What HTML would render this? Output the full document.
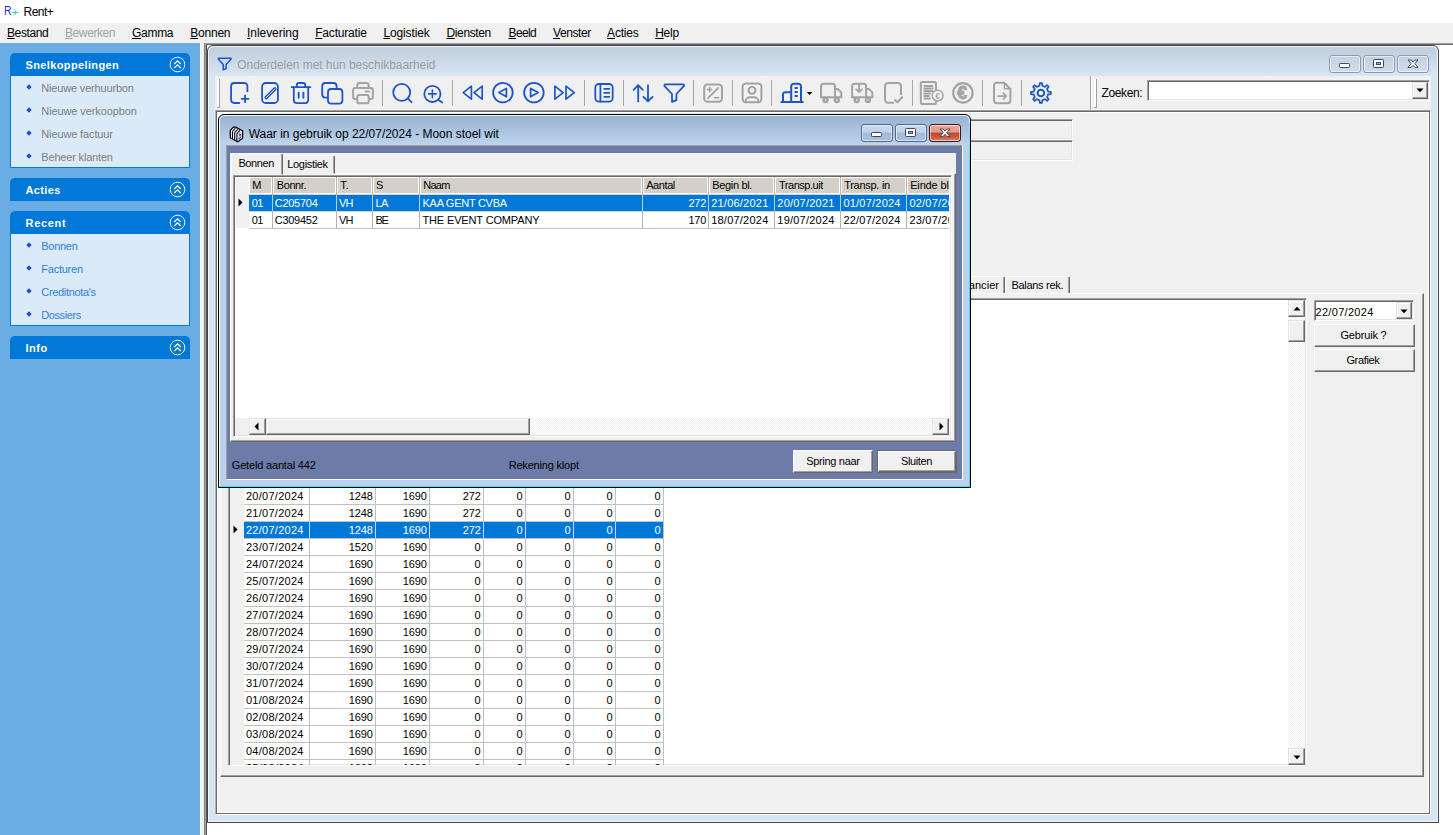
<!DOCTYPE html>
<html lang="nl"><head><meta charset="utf-8"><title>Rent+</title>
<style>
html,body{margin:0;padding:0;background:#fff;}
body{width:1453px;height:835px;overflow:hidden;font-family:"Liberation Sans",sans-serif;}
#root{position:relative;width:1453px;height:835px;overflow:hidden;background:#fff;}
#root div,#root span.t,#root svg{position:absolute;box-sizing:border-box;}
span.t{white-space:pre;display:block;}
u{text-decoration:underline;text-underline-offset:1px;}
.sunk{border:1px solid;border-color:#a0a0a0 #fff #fff #a0a0a0;box-shadow:inset 1px 1px 0 #696969,inset -1px -1px 0 #e3e3e3;}
.btn{background:#f0f0f0;border:1px solid;border-color:#fff #696969 #696969 #fff;box-shadow:inset -1px -1px 0 #a0a0a0,inset 1px 1px 0 #f0f0f0;}
.sbtn{background:#f0f0f0;border:1px solid;border-color:#e3e3e3 #696969 #696969 #e3e3e3;box-shadow:inset -1px -1px 0 #a0a0a0,inset 1px 1px 0 #fff;}
.hc{background:#d4d0c8;}
.track{background-color:#f8f8f8;background-image:conic-gradient(#fff 25%,#f0f0f0 0 50%,#fff 0 75%,#f0f0f0 0);background-size:2px 2px;}

</style></head>
<body>
<div id="root">
<div style="left:0px;top:23px;width:1453px;height:20px;background:#f0f0f0;"></div>
<span id="t0" class="t" style="top:3px;font-size:13px;line-height:15px;height:15px;color:#2a2ae0;left:3.6px;transform:scaleX(.8);transform-origin:0 0;">R</span>
<span id="t1" class="t" style="top:6px;font-size:11px;line-height:13px;height:13px;color:#1fcdb4;letter-spacing:-0.838px;left:11.7px;">+</span>
<span id="t2" class="t" style="top:5px;font-size:12px;line-height:14px;height:14px;color:#000;letter-spacing:-0.524px;left:23.5px;">Rent+</span>
<span id="t3" class="t" style="top:26px;font-size:12px;line-height:14px;height:14px;color:#000;letter-spacing:-0.407px;left:7px;"><u>B</u>estand</span>
<span id="t4" class="t" style="top:26px;font-size:12px;line-height:14px;height:14px;color:#a3a3a3;letter-spacing:-0.410px;left:65px;"><u>B</u>ewerken</span>
<span id="t5" class="t" style="top:26px;font-size:12px;line-height:14px;height:14px;color:#000;letter-spacing:-0.286px;left:132px;"><u>G</u>amma</span>
<span id="t6" class="t" style="top:26px;font-size:12px;line-height:14px;height:14px;color:#000;letter-spacing:-0.235px;left:190.3px;"><u>B</u>onnen</span>
<span id="t7" class="t" style="top:26px;font-size:12px;line-height:14px;height:14px;color:#000;letter-spacing:-0.047px;left:247px;"><u>I</u>nlevering</span>
<span id="t8" class="t" style="top:26px;font-size:12px;line-height:14px;height:14px;color:#000;letter-spacing:-0.187px;left:315.2px;"><u>F</u>acturatie</span>
<span id="t9" class="t" style="top:26px;font-size:12px;line-height:14px;height:14px;color:#000;letter-spacing:-0.126px;left:383.4px;"><u>L</u>ogistiek</span>
<span id="t10" class="t" style="top:26px;font-size:12px;line-height:14px;height:14px;color:#000;letter-spacing:-0.370px;left:446.5px;"><u>D</u>iensten</span>
<span id="t11" class="t" style="top:26px;font-size:12px;line-height:14px;height:14px;color:#000;letter-spacing:-0.601px;left:508.5px;"><u>B</u>eeld</span>
<span id="t12" class="t" style="top:26px;font-size:12px;line-height:14px;height:14px;color:#000;letter-spacing:-0.431px;left:553.1px;"><u>V</u>enster</span>
<span id="t13" class="t" style="top:26px;font-size:12px;line-height:14px;height:14px;color:#000;letter-spacing:-0.219px;left:607.1px;"><u>A</u>cties</span>
<span id="t14" class="t" style="top:26px;font-size:12px;line-height:14px;height:14px;color:#000;letter-spacing:-0.254px;left:655.2px;"><u>H</u>elp</span>
<div style="left:0px;top:43px;width:200px;height:792px;background:#6aade4;"></div>
<div style="left:200px;top:43px;width:4px;height:792px;background:#f0f0f0;border-left:1px solid #fff;"></div>
<div style="left:10px;top:53px;width:180px;height:23px;background:#0078d7;border-radius:5px 5px 0 0;"></div>
<span id="t15" class="t" style="top:59px;font-size:11px;line-height:13px;height:13px;color:#fff;font-weight:bold;letter-spacing:0.371px;left:25.5px;">Snelkoppelingen</span>
<svg style="left:169px;top:56px" width="17" height="17" viewBox="0 0 17 17"><circle cx="8.5" cy="8.5" r="7.3" fill="none" stroke="#fff" stroke-width="1"/><path d="M5.2 8 L8.5 4.8 L11.8 8 M5.2 12 L8.5 8.8 L11.8 12" fill="none" stroke="#fff" stroke-width="1.2"/></svg>
<div style="left:10px;top:76px;width:180px;height:92px;background:#dbeaf9;border:1px solid #0078d7;border-top:none;"></div>
<svg style="left:25.5px;top:84.1px" width="6" height="6" viewBox="0 0 6 6"><path d="M3 0.3 L5.7 3 L3 5.7 L0.3 3Z" fill="#1f4fd0"/></svg>
<span id="t16" class="t" style="top:82px;font-size:11px;line-height:13px;height:13px;color:#7d7d7d;letter-spacing:-0.175px;left:41.3px;">Nieuwe verhuurbon</span>
<svg style="left:25.5px;top:107.1px" width="6" height="6" viewBox="0 0 6 6"><path d="M3 0.3 L5.7 3 L3 5.7 L0.3 3Z" fill="#1f4fd0"/></svg>
<span id="t17" class="t" style="top:105px;font-size:11px;line-height:13px;height:13px;color:#7d7d7d;letter-spacing:-0.099px;left:41.3px;">Nieuwe verkoopbon</span>
<svg style="left:25.5px;top:130.1px" width="6" height="6" viewBox="0 0 6 6"><path d="M3 0.3 L5.7 3 L3 5.7 L0.3 3Z" fill="#1f4fd0"/></svg>
<span id="t18" class="t" style="top:128px;font-size:11px;line-height:13px;height:13px;color:#7d7d7d;letter-spacing:-0.131px;left:41.3px;">Nieuwe factuur</span>
<svg style="left:25.5px;top:153.1px" width="6" height="6" viewBox="0 0 6 6"><path d="M3 0.3 L5.7 3 L3 5.7 L0.3 3Z" fill="#1f4fd0"/></svg>
<span id="t19" class="t" style="top:151px;font-size:11px;line-height:13px;height:13px;color:#7d7d7d;letter-spacing:-0.178px;left:41.3px;">Beheer klanten</span>
<div style="left:10px;top:178px;width:180px;height:23px;background:#0078d7;border-radius:5px 5px 0 0;"></div>
<span id="t20" class="t" style="top:184px;font-size:11px;line-height:13px;height:13px;color:#fff;font-weight:bold;letter-spacing:0.358px;left:25.5px;">Acties</span>
<svg style="left:169px;top:181px" width="17" height="17" viewBox="0 0 17 17"><circle cx="8.5" cy="8.5" r="7.3" fill="none" stroke="#fff" stroke-width="1"/><path d="M5.2 8 L8.5 4.8 L11.8 8 M5.2 12 L8.5 8.8 L11.8 12" fill="none" stroke="#fff" stroke-width="1.2"/></svg>
<div style="left:10px;top:211px;width:180px;height:23px;background:#0078d7;border-radius:5px 5px 0 0;"></div>
<span id="t21" class="t" style="top:217px;font-size:11px;line-height:13px;height:13px;color:#fff;font-weight:bold;letter-spacing:0.693px;left:25.5px;">Recent</span>
<svg style="left:169px;top:214px" width="17" height="17" viewBox="0 0 17 17"><circle cx="8.5" cy="8.5" r="7.3" fill="none" stroke="#fff" stroke-width="1"/><path d="M5.2 8 L8.5 4.8 L11.8 8 M5.2 12 L8.5 8.8 L11.8 12" fill="none" stroke="#fff" stroke-width="1.2"/></svg>
<div style="left:10px;top:234px;width:180px;height:92px;background:#dbeaf9;border:1px solid #0078d7;border-top:none;"></div>
<svg style="left:25.5px;top:242.1px" width="6" height="6" viewBox="0 0 6 6"><path d="M3 0.3 L5.7 3 L3 5.7 L0.3 3Z" fill="#1f4fd0"/></svg>
<span id="t22" class="t" style="top:240px;font-size:11px;line-height:13px;height:13px;color:#2f7fd6;letter-spacing:-0.280px;left:41.3px;">Bonnen</span>
<svg style="left:25.5px;top:265.1px" width="6" height="6" viewBox="0 0 6 6"><path d="M3 0.3 L5.7 3 L3 5.7 L0.3 3Z" fill="#1f4fd0"/></svg>
<span id="t23" class="t" style="top:263px;font-size:11px;line-height:13px;height:13px;color:#2f7fd6;letter-spacing:-0.243px;left:41.3px;">Facturen</span>
<svg style="left:25.5px;top:288.1px" width="6" height="6" viewBox="0 0 6 6"><path d="M3 0.3 L5.7 3 L3 5.7 L0.3 3Z" fill="#1f4fd0"/></svg>
<span id="t24" class="t" style="top:286px;font-size:11px;line-height:13px;height:13px;color:#2f7fd6;letter-spacing:-0.327px;left:41.3px;">Creditnota's</span>
<svg style="left:25.5px;top:311.1px" width="6" height="6" viewBox="0 0 6 6"><path d="M3 0.3 L5.7 3 L3 5.7 L0.3 3Z" fill="#1f4fd0"/></svg>
<span id="t25" class="t" style="top:309px;font-size:11px;line-height:13px;height:13px;color:#2f7fd6;letter-spacing:-0.413px;left:41.3px;">Dossiers</span>
<div style="left:10px;top:336px;width:180px;height:23px;background:#0078d7;border-radius:5px 5px 0 0;"></div>
<span id="t26" class="t" style="top:342px;font-size:11px;line-height:13px;height:13px;color:#fff;font-weight:bold;letter-spacing:0.522px;left:25.5px;">Info</span>
<svg style="left:169px;top:339px" width="17" height="17" viewBox="0 0 17 17"><circle cx="8.5" cy="8.5" r="7.3" fill="none" stroke="#fff" stroke-width="1"/><path d="M5.2 8 L8.5 4.8 L11.8 8 M5.2 12 L8.5 8.8 L11.8 12" fill="none" stroke="#fff" stroke-width="1.2"/></svg>
<div style="left:204px;top:43px;width:1249px;height:1px;background:#a0a0a0;"></div>
<div style="left:204px;top:44px;width:1249px;height:1px;background:#696969;"></div>
<div style="left:204px;top:43px;width:1px;height:792px;background:#808080;"></div>
<div style="left:205px;top:44px;width:1px;height:791px;background:#a0a0a0;"></div>
<div style="left:206px;top:44px;width:1px;height:791px;background:#555;"></div>
<div style="left:207px;top:45px;width:1232px;height:778px;background:#d7e4f2;border:1px solid #454545;border-radius:6px 6px 0 0;box-shadow:inset 0 0 0 1px #f0f5fb;"></div>
<div style="left:209px;top:47px;width:1228px;height:29px;background:linear-gradient(#bfcddc,#d9e5f2);border-radius:5px 5px 0 0;"></div>
<svg style="left:216px;top:55px" width="18" height="17" viewBox="216 55 18 17"><g transform="translate(218.2 58.2) scale(0.655) translate(-664.3 -84.4)"><path d="M665.4 84.4 H683 a1 1 0 0 1 0.8 1.7 L676.4 94 V100.2 L672 101.9 V94 L664.6 86.1 a1 1 0 0 1 0.8 -1.7 Z" fill="none" stroke="#1d56c4" stroke-width="2.4" stroke-linejoin="round"/></g></svg>
<span id="t27" class="t" style="top:58px;font-size:12px;line-height:14px;height:14px;color:#9e9ca2;letter-spacing:-0.058px;left:237.3px;">Onderdelen met hun beschikbaarheid</span>
<div style="left:1329px;top:55px;width:32px;height:18px;background:linear-gradient(#c3d1e1,#cfdcea);border:1px solid #8d9ab5;border-radius:3px;box-shadow:inset 0 0 0 1px rgba(255,255,255,.55);"></div>
<svg style="left:1338px;top:62px" width="13" height="7" viewBox="0 0 13 7"><rect x="1.5" y="1.5" width="10" height="4" rx="0.8" fill="#fbfbfb" stroke="#41485c" stroke-width="1"/></svg>
<div style="left:1363px;top:55px;width:32px;height:18px;background:linear-gradient(#c3d1e1,#cfdcea);border:1px solid #8d9ab5;border-radius:3px;box-shadow:inset 0 0 0 1px rgba(255,255,255,.55);"></div>
<svg style="left:1372px;top:58px" width="13" height="11" viewBox="0 0 13 11"><rect x="1.5" y="1.5" width="10" height="8" rx="0.8" fill="#fbfbfb" stroke="#41485c" stroke-width="1"/><rect x="4.5" y="4.5" width="4" height="2" fill="#9fb6d2" stroke="#41485c" stroke-width="1"/></svg>
<div style="left:1397px;top:55px;width:32px;height:18px;background:linear-gradient(#c3d1e1,#cfdcea);border:1px solid #8d9ab5;border-radius:3px;box-shadow:inset 0 0 0 1px rgba(255,255,255,.55);"></div>
<svg style="left:1406px;top:58px" width="14" height="11" viewBox="0 0 14 11"><path d="M2 2 H5.2 L7 4 L8.8 2 H12 L8.8 5.6 L12 9.4 H8.8 L7 7.3 L5.2 9.4 H2 L5.2 5.6 Z" fill="#fbfbfb" stroke="#41485c" stroke-width="1" stroke-linejoin="round"/></svg>
<div style="left:215px;top:76px;width:1216px;height:34px;background:#f0f0f0;"></div>
<div style="left:217px;top:79px;width:2px;height:28px;background:#fff;"></div>
<div style="left:219px;top:79px;width:1px;height:29px;background:#a0a0a0;"></div>
<div style="left:217px;top:107px;width:2px;height:1px;background:#a0a0a0;"></div>
<div style="left:382px;top:80px;width:1px;height:26px;background:#a7a7a7;"></div>
<div style="left:452px;top:80px;width:1px;height:26px;background:#a7a7a7;"></div>
<div style="left:584px;top:80px;width:1px;height:26px;background:#a7a7a7;"></div>
<div style="left:623px;top:80px;width:1px;height:26px;background:#a7a7a7;"></div>
<div style="left:693px;top:80px;width:1px;height:26px;background:#a7a7a7;"></div>
<div style="left:732px;top:80px;width:1px;height:26px;background:#a7a7a7;"></div>
<div style="left:771px;top:80px;width:1px;height:26px;background:#a7a7a7;"></div>
<div style="left:912px;top:80px;width:1px;height:26px;background:#a7a7a7;"></div>
<div style="left:982px;top:80px;width:1px;height:26px;background:#a7a7a7;"></div>
<div style="left:1021px;top:80px;width:1px;height:26px;background:#a7a7a7;"></div>
<div style="left:1090px;top:76px;width:1px;height:34px;background:#a0a0a0;"></div>
<div style="left:1091px;top:76px;width:1px;height:34px;background:#fff;"></div>
<div style="left:1094px;top:79px;width:2px;height:28px;background:#fff;"></div>
<div style="left:1096px;top:79px;width:1px;height:29px;background:#a0a0a0;"></div>
<div style="left:1094px;top:107px;width:2px;height:1px;background:#a0a0a0;"></div>
<span id="t28" class="t" style="top:86px;font-size:12px;line-height:14px;height:14px;color:#000;letter-spacing:-0.394px;left:1101.6px;">Zoeken:</span>
<div class="sunk" style="left:1147px;top:80px;width:283px;height:21px;background:#fff;"></div>
<div class="sbtn" style="left:1412px;top:82px;width:16px;height:17px;"></div>
<svg style="left:1416px;top:88px" width="8" height="5" viewBox="0 0 8 5"><path d="M0.5 0.5H7.5L4 4.3Z" fill="#000"/></svg>
<svg style="left:215px;top:76px" width="1216" height="34" viewBox="215 76 1216 34"><path d="M247.4 91.3 V86.2 a3.2 3.2 0 0 0 -3.2 -3.2 H234.3 a3.2 3.2 0 0 0 -3.2 3.2 V99.8 a3.2 3.2 0 0 0 3.2 3.2 H239.3" fill="none" stroke="#1d56c4" stroke-width="1.8" stroke-linecap="round" stroke-linejoin="round" /><path d="M241.7 98.8 H248.5 M245.1 95.4 V102.2" fill="none" stroke="#1d56c4" stroke-width="1.8" stroke-linecap="round" stroke-linejoin="round" /><rect x="262.1" y="83" width="15.8" height="20" rx="3.6" fill="none" stroke="#1d56c4" stroke-width="1.8"/><path d="M266.2 97.6 L274.8 89" fill="none" stroke="#1d56c4" stroke-width="3.6" stroke-linecap="round" stroke-linejoin="round" /><path d="M266.2 97.6 L274.8 89" fill="none" stroke="#f0f0f0" stroke-width="1.0" stroke-linecap="round" stroke-linejoin="round" /><path d="M291.6 87.1 H310.4" fill="none" stroke="#1d56c4" stroke-width="1.8" stroke-linecap="round" stroke-linejoin="round" /><path d="M296.8 86.8 V85.2 a2.2 2.2 0 0 1 2.2 -2.2 h4 a2.2 2.2 0 0 1 2.2 2.2 V86.8" fill="none" stroke="#1d56c4" stroke-width="1.8" stroke-linecap="round" stroke-linejoin="round" /><path d="M293.8 87.3 V100 a3.2 3.2 0 0 0 3.2 3.2 h8 a3.2 3.2 0 0 0 3.2 -3.2 V87.3" fill="none" stroke="#1d56c4" stroke-width="1.8" stroke-linecap="round" stroke-linejoin="round" /><path d="M298.7 92.6 V97.8 M303.4 92.6 V97.8" fill="none" stroke="#1d56c4" stroke-width="1.9" stroke-linecap="round" stroke-linejoin="round" /><rect x="322.2" y="83" width="14.4" height="14.6" rx="3.2" fill="none" stroke="#1d56c4" stroke-width="1.8"/><rect x="328" y="89" width="14.4" height="14.6" rx="3.2" fill="#f0f0f0" stroke="#1d56c4" stroke-width="1.8"/><path d="M357.3 88 V85.2 a2.2 2.2 0 0 1 2.2 -2.2 h7 a2.2 2.2 0 0 1 2.2 2.2 V88" fill="none" stroke="#a3a3a3" stroke-width="2" stroke-linecap="round" stroke-linejoin="round" /><path d="M357 99 H355.4 a2.3 2.3 0 0 1 -2.3 -2.3 V90.3 a2.3 2.3 0 0 1 2.3 -2.3 h15.2 a2.3 2.3 0 0 1 2.3 2.3 v6.4 a2.3 2.3 0 0 1 -2.3 2.3 H369" fill="none" stroke="#a3a3a3" stroke-width="2" stroke-linecap="round" stroke-linejoin="round" /><rect x="357.3" y="95" width="11.4" height="8.2" rx="1.8" fill="#f0f0f0" stroke="#a3a3a3" stroke-width="2"/><path d="M365.6 91.6 h3.4" fill="none" stroke="#a3a3a3" stroke-width="2" stroke-linecap="round" stroke-linejoin="round" /><circle cx="401.7" cy="92.3" r="8.5" fill="none" stroke="#1d56c4" stroke-width="1.8"/><path d="M408 98.6 L411.6 102.2" fill="none" stroke="#1d56c4" stroke-width="1.8" stroke-linecap="round" stroke-linejoin="round" /><circle cx="432.4" cy="93.9" r="8.1" fill="none" stroke="#1d56c4" stroke-width="1.8"/><path d="M438.3 99.8 L442.2 102.6" fill="none" stroke="#1d56c4" stroke-width="1.8" stroke-linecap="round" stroke-linejoin="round" /><path d="M428.6 93.9 h7.6 M432.4 90.1 v7.6" fill="none" stroke="#1d56c4" stroke-width="1.6" stroke-linecap="round" stroke-linejoin="round" /><path d="M471.4 86.2 L463.2 92.7 L471.4 99.2 Z" fill="none" stroke="#1d56c4" stroke-width="1.7" stroke-linecap="round" stroke-linejoin="round" /><path d="M482.2 86.2 L474 92.7 L482.2 99.2 Z" fill="none" stroke="#1d56c4" stroke-width="1.7" stroke-linecap="round" stroke-linejoin="round" /><circle cx="502.9" cy="92.6" r="9.8" fill="none" stroke="#1d56c4" stroke-width="1.8"/><path d="M506.4 88.4 L498.9 92.6 L506.4 96.8 Z" fill="none" stroke="#1d56c4" stroke-width="1.7" stroke-linecap="round" stroke-linejoin="round" /><circle cx="533.9" cy="92.6" r="9.8" fill="none" stroke="#1d56c4" stroke-width="1.8"/><path d="M530.6 88.4 L538.1 92.6 L530.6 96.8 Z" fill="none" stroke="#1d56c4" stroke-width="1.7" stroke-linecap="round" stroke-linejoin="round" /><path d="M554.9 86.2 L563.1 92.7 L554.9 99.2 Z" fill="none" stroke="#1d56c4" stroke-width="1.7" stroke-linecap="round" stroke-linejoin="round" /><path d="M566 86.2 L574.2 92.7 L566 99.2 Z" fill="none" stroke="#1d56c4" stroke-width="1.7" stroke-linecap="round" stroke-linejoin="round" /><rect x="595.3" y="84" width="17.4" height="17.6" rx="3.6" fill="none" stroke="#1d56c4" stroke-width="1.8"/><path d="M600.4 84 V101.6" fill="none" stroke="#1d56c4" stroke-width="1.8" stroke-linecap="round" stroke-linejoin="round" /><path d="M604.2 88.8 H609.4 M604.2 92.8 H609.4 M604.2 96.8 H609.4" fill="none" stroke="#1d56c4" stroke-width="1.7" stroke-linecap="round" stroke-linejoin="round" /><path d="M638.2 85.2 V101.4 M633.6 89.8 L638.2 85.2 L642.8 89.8" fill="none" stroke="#1d56c4" stroke-width="1.8" stroke-linecap="round" stroke-linejoin="round" /><path d="M648 85.2 V101.4 M643.4 96.8 L648 101.4 L652.6 96.8" fill="none" stroke="#1d56c4" stroke-width="1.8" stroke-linecap="round" stroke-linejoin="round" /><path d="M665.4 84.4 H683 a1 1 0 0 1 0.8 1.7 L676.4 94 V100.2 L672 101.9 V94 L664.6 86.1 a1 1 0 0 1 0.8 -1.7 Z" fill="none" stroke="#1d56c4" stroke-width="1.8" stroke-linecap="round" stroke-linejoin="round" /><rect x="704.2" y="84.4" width="17.8" height="17.4" rx="3.2" fill="none" stroke="#a3a3a3" stroke-width="2"/><path d="M708 98.2 L718.2 88" fill="none" stroke="#a3a3a3" stroke-width="1.8" stroke-linecap="round" stroke-linejoin="round" /><path d="M707.6 89.6 h4 M709.6 87.6 v4 M714.6 97.8 h4" fill="none" stroke="#a3a3a3" stroke-width="1.6" stroke-linecap="round" stroke-linejoin="round" /><rect x="742.6" y="83.5" width="18.8" height="18.8" rx="3.2" fill="none" stroke="#a3a3a3" stroke-width="2"/><circle cx="752" cy="90.4" r="3.4" fill="none" stroke="#a3a3a3" stroke-width="2"/><path d="M745.8 102 v-0.8 a4 4 0 0 1 4 -4 h4.4 a4 4 0 0 1 4 4 v0.8" fill="none" stroke="#a3a3a3" stroke-width="2" stroke-linecap="round" stroke-linejoin="round" /><path d="M791.2 102 V86.4 a2.6 2.6 0 0 1 2.6 -2.6 h4.6 a2.6 2.6 0 0 1 2.6 2.6 V102" fill="none" stroke="#1d56c4" stroke-width="2" stroke-linecap="round" stroke-linejoin="round" /><path d="M791.2 92.2 H785.4 a2.4 2.4 0 0 0 -2.4 2.4 V102" fill="none" stroke="#1d56c4" stroke-width="2" stroke-linecap="round" stroke-linejoin="round" /><path d="M781.4 102.1 H802.8" fill="none" stroke="#1d56c4" stroke-width="2" stroke-linecap="round" stroke-linejoin="round" /><path d="M794.6 87.9 h3.2 M794.6 92 h3.2 M794.6 96.1 h3.2" fill="none" stroke="#1d56c4" stroke-width="2" stroke-linecap="round" stroke-linejoin="round" style="stroke-linecap:butt"/><path d="M806.8 92 h5.6 l-2.8 3 z" fill="#000"/><path d="M821 97.2 V86.2 a2.4 2.4 0 0 1 2.4 -2.4 h9.2 a2.4 2.4 0 0 1 2.4 2.4 V97.2" fill="none" stroke="#a3a3a3" stroke-width="2" stroke-linecap="round" stroke-linejoin="round" /><path d="M835 89 h2.2 a1.6 1.6 0 0 1 1.2 0.5 l2.4 2.4 a1.6 1.6 0 0 1 0.5 1.2 V97.2" fill="none" stroke="#a3a3a3" stroke-width="2" stroke-linecap="round" stroke-linejoin="round" /><path d="M821 97.2 H841" fill="none" stroke="#a3a3a3" stroke-width="2" stroke-linecap="round" stroke-linejoin="round" /><circle cx="825.6" cy="100" r="2.0" fill="#fff" stroke="#a3a3a3" stroke-width="2.4"/><circle cx="836.8" cy="100" r="2.0" fill="#fff" stroke="#a3a3a3" stroke-width="2.4"/><path d="M852.1 97.2 V86.2 a2.4 2.4 0 0 1 2.4 -2.4 h9.2 a2.4 2.4 0 0 1 2.4 2.4 V97.2" fill="none" stroke="#a3a3a3" stroke-width="2" stroke-linecap="round" stroke-linejoin="round" /><path d="M866.1 89 h2.2 a1.6 1.6 0 0 1 1.2 0.5 l2.4 2.4 a1.6 1.6 0 0 1 0.5 1.2 V97.2" fill="none" stroke="#a3a3a3" stroke-width="2" stroke-linecap="round" stroke-linejoin="round" /><path d="M852.1 97.2 H872.1" fill="none" stroke="#a3a3a3" stroke-width="2" stroke-linecap="round" stroke-linejoin="round" /><circle cx="856.7" cy="100" r="2.0" fill="#fff" stroke="#a3a3a3" stroke-width="2.4"/><circle cx="867.9" cy="100" r="2.0" fill="#fff" stroke="#a3a3a3" stroke-width="2.4"/><path d="M859.1 84.5 V92 M856.3000000000001 89.4 L859.1 92.2 L861.9 89.4" fill="none" stroke="#a3a3a3" stroke-width="1.8" stroke-linecap="round" stroke-linejoin="round" /><path d="M901 94.2 V86.2 a3.2 3.2 0 0 0 -3.2 -3.2 H888.2 a3.2 3.2 0 0 0 -3.2 3.2 V99.6 a3.2 3.2 0 0 0 3.2 3.2 H893.2" fill="none" stroke="#a3a3a3" stroke-width="2" stroke-linecap="round" stroke-linejoin="round" /><path d="M895 100 L897.4 102.3 L902.2 97.3" fill="none" stroke="#a3a3a3" stroke-width="2" stroke-linecap="round" stroke-linejoin="round" /><rect x="920.8" y="82" width="15.2" height="22" rx="1.6" fill="none" stroke="#a3a3a3" stroke-width="2"/><path d="M923.6 86 h9.6 M923.6 88.5 h9.6 M923.6 91 h9.6 M923.6 93.5 h7 M923.6 96 h6 M923.6 98.5 h7" fill="none" stroke="#a3a3a3" stroke-width="1.8" stroke-linecap="round" stroke-linejoin="round" style="stroke-linecap:butt"/><circle cx="937.6" cy="95.6" r="5.4" fill="#f7f7f7" stroke="#a3a3a3" stroke-width="1.6"/><text x="937.6" y="98.6" font-size="8.5" font-weight="bold" text-anchor="middle" fill="#a3a3a3" font-family="Liberation Sans, sans-serif">€</text><circle cx="962.9" cy="92.9" r="9.7" fill="none" stroke="#a3a3a3" stroke-width="2.2"/><text x="962" y="99.2" font-size="17.5" font-weight="bold" text-anchor="middle" fill="#a3a3a3" stroke="#a3a3a3" stroke-width="0.9" font-family="Liberation Sans, sans-serif">€</text><path d="M1004.2 82.8 H996.6 a2.6 2.6 0 0 0 -2.6 2.6 V100.6 a2.6 2.6 0 0 0 2.6 2.6 h11.2 a2.6 2.6 0 0 0 2.6 -2.6 V89 Z" fill="none" stroke="#a3a3a3" stroke-width="2" stroke-linecap="round" stroke-linejoin="round" /><path d="M1004.4 83.4 V88.8 H1010" fill="none" stroke="#a3a3a3" stroke-width="1.4" stroke-linecap="round" stroke-linejoin="round" /><path d="M998.2 96.1 H1006.2 M1003.4 93.2 L1006.4 96.1 L1003.4 99" fill="none" stroke="#a3a3a3" stroke-width="1.7" stroke-linecap="round" stroke-linejoin="round" /><path d="M1039.46 85.74 L1039.81 83.06 L1041.99 83.06 L1042.34 85.74 L1045.01 86.85 L1047.16 85.20 L1048.70 86.74 L1047.05 88.89 L1048.16 91.56 L1050.84 91.91 L1050.84 94.09 L1048.16 94.44 L1047.05 97.11 L1048.70 99.26 L1047.16 100.80 L1045.01 99.15 L1042.34 100.26 L1041.99 102.94 L1039.81 102.94 L1039.46 100.26 L1036.79 99.15 L1034.64 100.80 L1033.10 99.26 L1034.75 97.11 L1033.64 94.44 L1030.96 94.09 L1030.96 91.91 L1033.64 91.56 L1034.75 88.89 L1033.10 86.74 L1034.64 85.20 L1036.79 86.85 Z" fill="none" stroke="#1d56c4" stroke-width="1.7" stroke-linecap="round" stroke-linejoin="round" /><circle cx="1040.9" cy="93" r="3.3" fill="none" stroke="#1d56c4" stroke-width="2"/></svg>
<div style="left:215px;top:110px;width:1216px;height:705px;background:#f0f0f0;border:1px solid;border-color:#a0a0a0 #fff #fff #b4b4b4;box-shadow:inset 1px 1px 0 #696969,inset -1px -1px 0 #696969,inset 2px 2px 0 #fff,inset -2px -2px 0 #fafafa;"></div>
<div class="sunk" style="left:860px;top:119px;width:213px;height:21px;background:#f0f0f0;"></div>
<div class="sunk" style="left:860px;top:140px;width:213px;height:21px;background:#f0f0f0;"></div>
<div style="left:900px;top:276px;width:105px;height:18px;background:#f0f0f0;border:1px solid;border-color:#fff #696969 transparent #fff;border-radius:2px 2px 0 0;box-shadow:inset -1px 0 0 #a0a0a0;"></div>
<div style="left:1005px;top:276px;width:65px;height:18px;background:#f0f0f0;border:1px solid;border-color:#fff #696969 transparent #fff;border-radius:2px 2px 0 0;box-shadow:inset -1px 0 0 #a0a0a0;"></div>
<span id="t29" class="t" style="top:279px;font-size:11px;line-height:13px;height:13px;color:#000;letter-spacing:0.049px;left:941px;">Leverancier</span>
<span id="t30" class="t" style="top:279px;font-size:11px;line-height:13px;height:13px;color:#000;letter-spacing:-0.289px;left:1011.4px;">Balans rek.</span>
<div style="left:220px;top:293px;width:1204px;height:484px;background:#f0f0f0;border:1px solid;border-color:#fff #696969 #696969 #fff;box-shadow:inset -1px -1px 0 #a0a0a0;"></div>
<div class="sunk" style="left:228px;top:298px;width:1079px;height:468px;background:#fff;"></div>
<div style="left:230px;top:300px;width:14px;height:465px;background:#f0f0f0;"></div>
<div style="left:244px;top:300px;width:420px;height:1px;background:#c0c0c0;"></div>
<div style="left:244px;top:317px;width:420px;height:1px;background:#c0c0c0;"></div>
<div style="left:244px;top:334px;width:420px;height:1px;background:#c0c0c0;"></div>
<div style="left:244px;top:351px;width:420px;height:1px;background:#c0c0c0;"></div>
<div style="left:244px;top:368px;width:420px;height:1px;background:#c0c0c0;"></div>
<div style="left:244px;top:385px;width:420px;height:1px;background:#c0c0c0;"></div>
<div style="left:244px;top:402px;width:420px;height:1px;background:#c0c0c0;"></div>
<div style="left:244px;top:419px;width:420px;height:1px;background:#c0c0c0;"></div>
<div style="left:244px;top:436px;width:420px;height:1px;background:#c0c0c0;"></div>
<div style="left:244px;top:453px;width:420px;height:1px;background:#c0c0c0;"></div>
<div style="left:244px;top:470px;width:420px;height:1px;background:#c0c0c0;"></div>
<div style="left:244px;top:487px;width:420px;height:1px;background:#c0c0c0;"></div>
<div style="left:244px;top:504px;width:420px;height:1px;background:#c0c0c0;"></div>
<div style="left:244px;top:521px;width:420px;height:1px;background:#c0c0c0;"></div>
<div style="left:244px;top:538px;width:420px;height:1px;background:#c0c0c0;"></div>
<div style="left:244px;top:555px;width:420px;height:1px;background:#c0c0c0;"></div>
<div style="left:244px;top:572px;width:420px;height:1px;background:#c0c0c0;"></div>
<div style="left:244px;top:589px;width:420px;height:1px;background:#c0c0c0;"></div>
<div style="left:244px;top:606px;width:420px;height:1px;background:#c0c0c0;"></div>
<div style="left:244px;top:623px;width:420px;height:1px;background:#c0c0c0;"></div>
<div style="left:244px;top:640px;width:420px;height:1px;background:#c0c0c0;"></div>
<div style="left:244px;top:657px;width:420px;height:1px;background:#c0c0c0;"></div>
<div style="left:244px;top:674px;width:420px;height:1px;background:#c0c0c0;"></div>
<div style="left:244px;top:691px;width:420px;height:1px;background:#c0c0c0;"></div>
<div style="left:244px;top:708px;width:420px;height:1px;background:#c0c0c0;"></div>
<div style="left:244px;top:725px;width:420px;height:1px;background:#c0c0c0;"></div>
<div style="left:244px;top:742px;width:420px;height:1px;background:#c0c0c0;"></div>
<div style="left:244px;top:759px;width:420px;height:1px;background:#c0c0c0;"></div>
<div style="left:309px;top:300px;width:1px;height:465px;background:#c0c0c0;"></div>
<div style="left:375px;top:300px;width:1px;height:465px;background:#c0c0c0;"></div>
<div style="left:429px;top:300px;width:1px;height:465px;background:#c0c0c0;"></div>
<div style="left:483px;top:300px;width:1px;height:465px;background:#c0c0c0;"></div>
<div style="left:525px;top:300px;width:1px;height:465px;background:#c0c0c0;"></div>
<div style="left:573px;top:300px;width:1px;height:465px;background:#c0c0c0;"></div>
<div style="left:615px;top:300px;width:1px;height:465px;background:#c0c0c0;"></div>
<div style="left:663px;top:300px;width:1px;height:465px;background:#c0c0c0;"></div>
<span id="t31" class="t" style="top:490px;font-size:11px;line-height:13px;height:13px;color:#000;letter-spacing:0.278px;left:245.9px;">20/07/2024</span>
<span id="t32" class="t" style="top:490px;font-size:11px;line-height:13px;height:13px;color:#000;letter-spacing:-0.138px;right:1080.4px;">1248</span>
<span id="t33" class="t" style="top:490px;font-size:11px;line-height:13px;height:13px;color:#000;letter-spacing:-0.138px;right:1026.4px;">1690</span>
<span id="t34" class="t" style="top:490px;font-size:11px;line-height:13px;height:13px;color:#000;letter-spacing:-0.144px;right:972.4px;">272</span>
<span id="t35" class="t" style="top:490px;font-size:11px;line-height:13px;height:13px;color:#000;letter-spacing:-0.125px;right:930.4px;">0</span>
<span id="t36" class="t" style="top:490px;font-size:11px;line-height:13px;height:13px;color:#000;letter-spacing:-0.125px;right:882.4px;">0</span>
<span id="t37" class="t" style="top:490px;font-size:11px;line-height:13px;height:13px;color:#000;letter-spacing:-0.125px;right:840.4px;">0</span>
<span id="t38" class="t" style="top:490px;font-size:11px;line-height:13px;height:13px;color:#000;letter-spacing:-0.125px;right:792.4px;">0</span>
<span id="t39" class="t" style="top:507px;font-size:11px;line-height:13px;height:13px;color:#000;letter-spacing:0.278px;left:245.9px;">21/07/2024</span>
<span id="t40" class="t" style="top:507px;font-size:11px;line-height:13px;height:13px;color:#000;letter-spacing:-0.138px;right:1080.4px;">1248</span>
<span id="t41" class="t" style="top:507px;font-size:11px;line-height:13px;height:13px;color:#000;letter-spacing:-0.138px;right:1026.4px;">1690</span>
<span id="t42" class="t" style="top:507px;font-size:11px;line-height:13px;height:13px;color:#000;letter-spacing:-0.144px;right:972.4px;">272</span>
<span id="t43" class="t" style="top:507px;font-size:11px;line-height:13px;height:13px;color:#000;letter-spacing:-0.125px;right:930.4px;">0</span>
<span id="t44" class="t" style="top:507px;font-size:11px;line-height:13px;height:13px;color:#000;letter-spacing:-0.125px;right:882.4px;">0</span>
<span id="t45" class="t" style="top:507px;font-size:11px;line-height:13px;height:13px;color:#000;letter-spacing:-0.125px;right:840.4px;">0</span>
<span id="t46" class="t" style="top:507px;font-size:11px;line-height:13px;height:13px;color:#000;letter-spacing:-0.125px;right:792.4px;">0</span>
<div style="left:244px;top:522px;width:419px;height:16px;background:#0078d7;"></div>
<div style="left:309px;top:522px;width:1px;height:16px;background:#c8daf0;"></div>
<div style="left:375px;top:522px;width:1px;height:16px;background:#c8daf0;"></div>
<div style="left:429px;top:522px;width:1px;height:16px;background:#c8daf0;"></div>
<div style="left:483px;top:522px;width:1px;height:16px;background:#c8daf0;"></div>
<div style="left:525px;top:522px;width:1px;height:16px;background:#c8daf0;"></div>
<div style="left:573px;top:522px;width:1px;height:16px;background:#c8daf0;"></div>
<div style="left:615px;top:522px;width:1px;height:16px;background:#c8daf0;"></div>
<svg style="left:233px;top:525px" width="5" height="9" viewBox="0 0 5 9"><path d="M0.5 0.5L4.5 4.5L0.5 8.5Z" fill="#000"/></svg>
<span id="t47" class="t" style="top:524px;font-size:11px;line-height:13px;height:13px;color:#fff;letter-spacing:0.278px;left:245.9px;">22/07/2024</span>
<span id="t48" class="t" style="top:524px;font-size:11px;line-height:13px;height:13px;color:#fff;letter-spacing:-0.138px;right:1080.4px;">1248</span>
<span id="t49" class="t" style="top:524px;font-size:11px;line-height:13px;height:13px;color:#fff;letter-spacing:-0.138px;right:1026.4px;">1690</span>
<span id="t50" class="t" style="top:524px;font-size:11px;line-height:13px;height:13px;color:#fff;letter-spacing:-0.144px;right:972.4px;">272</span>
<span id="t51" class="t" style="top:524px;font-size:11px;line-height:13px;height:13px;color:#fff;letter-spacing:-0.125px;right:930.4px;">0</span>
<span id="t52" class="t" style="top:524px;font-size:11px;line-height:13px;height:13px;color:#fff;letter-spacing:-0.125px;right:882.4px;">0</span>
<span id="t53" class="t" style="top:524px;font-size:11px;line-height:13px;height:13px;color:#fff;letter-spacing:-0.125px;right:840.4px;">0</span>
<span id="t54" class="t" style="top:524px;font-size:11px;line-height:13px;height:13px;color:#fff;letter-spacing:-0.125px;right:792.4px;">0</span>
<span id="t55" class="t" style="top:541px;font-size:11px;line-height:13px;height:13px;color:#000;letter-spacing:0.278px;left:245.9px;">23/07/2024</span>
<span id="t56" class="t" style="top:541px;font-size:11px;line-height:13px;height:13px;color:#000;letter-spacing:-0.138px;right:1080.4px;">1520</span>
<span id="t57" class="t" style="top:541px;font-size:11px;line-height:13px;height:13px;color:#000;letter-spacing:-0.138px;right:1026.4px;">1690</span>
<span id="t58" class="t" style="top:541px;font-size:11px;line-height:13px;height:13px;color:#000;letter-spacing:-0.125px;right:972.4px;">0</span>
<span id="t59" class="t" style="top:541px;font-size:11px;line-height:13px;height:13px;color:#000;letter-spacing:-0.125px;right:930.4px;">0</span>
<span id="t60" class="t" style="top:541px;font-size:11px;line-height:13px;height:13px;color:#000;letter-spacing:-0.125px;right:882.4px;">0</span>
<span id="t61" class="t" style="top:541px;font-size:11px;line-height:13px;height:13px;color:#000;letter-spacing:-0.125px;right:840.4px;">0</span>
<span id="t62" class="t" style="top:541px;font-size:11px;line-height:13px;height:13px;color:#000;letter-spacing:-0.125px;right:792.4px;">0</span>
<span id="t63" class="t" style="top:558px;font-size:11px;line-height:13px;height:13px;color:#000;letter-spacing:0.278px;left:245.9px;">24/07/2024</span>
<span id="t64" class="t" style="top:558px;font-size:11px;line-height:13px;height:13px;color:#000;letter-spacing:-0.138px;right:1080.4px;">1690</span>
<span id="t65" class="t" style="top:558px;font-size:11px;line-height:13px;height:13px;color:#000;letter-spacing:-0.138px;right:1026.4px;">1690</span>
<span id="t66" class="t" style="top:558px;font-size:11px;line-height:13px;height:13px;color:#000;letter-spacing:-0.125px;right:972.4px;">0</span>
<span id="t67" class="t" style="top:558px;font-size:11px;line-height:13px;height:13px;color:#000;letter-spacing:-0.125px;right:930.4px;">0</span>
<span id="t68" class="t" style="top:558px;font-size:11px;line-height:13px;height:13px;color:#000;letter-spacing:-0.125px;right:882.4px;">0</span>
<span id="t69" class="t" style="top:558px;font-size:11px;line-height:13px;height:13px;color:#000;letter-spacing:-0.125px;right:840.4px;">0</span>
<span id="t70" class="t" style="top:558px;font-size:11px;line-height:13px;height:13px;color:#000;letter-spacing:-0.125px;right:792.4px;">0</span>
<span id="t71" class="t" style="top:575px;font-size:11px;line-height:13px;height:13px;color:#000;letter-spacing:0.278px;left:245.9px;">25/07/2024</span>
<span id="t72" class="t" style="top:575px;font-size:11px;line-height:13px;height:13px;color:#000;letter-spacing:-0.138px;right:1080.4px;">1690</span>
<span id="t73" class="t" style="top:575px;font-size:11px;line-height:13px;height:13px;color:#000;letter-spacing:-0.138px;right:1026.4px;">1690</span>
<span id="t74" class="t" style="top:575px;font-size:11px;line-height:13px;height:13px;color:#000;letter-spacing:-0.125px;right:972.4px;">0</span>
<span id="t75" class="t" style="top:575px;font-size:11px;line-height:13px;height:13px;color:#000;letter-spacing:-0.125px;right:930.4px;">0</span>
<span id="t76" class="t" style="top:575px;font-size:11px;line-height:13px;height:13px;color:#000;letter-spacing:-0.125px;right:882.4px;">0</span>
<span id="t77" class="t" style="top:575px;font-size:11px;line-height:13px;height:13px;color:#000;letter-spacing:-0.125px;right:840.4px;">0</span>
<span id="t78" class="t" style="top:575px;font-size:11px;line-height:13px;height:13px;color:#000;letter-spacing:-0.125px;right:792.4px;">0</span>
<span id="t79" class="t" style="top:592px;font-size:11px;line-height:13px;height:13px;color:#000;letter-spacing:0.278px;left:245.9px;">26/07/2024</span>
<span id="t80" class="t" style="top:592px;font-size:11px;line-height:13px;height:13px;color:#000;letter-spacing:-0.138px;right:1080.4px;">1690</span>
<span id="t81" class="t" style="top:592px;font-size:11px;line-height:13px;height:13px;color:#000;letter-spacing:-0.138px;right:1026.4px;">1690</span>
<span id="t82" class="t" style="top:592px;font-size:11px;line-height:13px;height:13px;color:#000;letter-spacing:-0.125px;right:972.4px;">0</span>
<span id="t83" class="t" style="top:592px;font-size:11px;line-height:13px;height:13px;color:#000;letter-spacing:-0.125px;right:930.4px;">0</span>
<span id="t84" class="t" style="top:592px;font-size:11px;line-height:13px;height:13px;color:#000;letter-spacing:-0.125px;right:882.4px;">0</span>
<span id="t85" class="t" style="top:592px;font-size:11px;line-height:13px;height:13px;color:#000;letter-spacing:-0.125px;right:840.4px;">0</span>
<span id="t86" class="t" style="top:592px;font-size:11px;line-height:13px;height:13px;color:#000;letter-spacing:-0.125px;right:792.4px;">0</span>
<span id="t87" class="t" style="top:609px;font-size:11px;line-height:13px;height:13px;color:#000;letter-spacing:0.278px;left:245.9px;">27/07/2024</span>
<span id="t88" class="t" style="top:609px;font-size:11px;line-height:13px;height:13px;color:#000;letter-spacing:-0.138px;right:1080.4px;">1690</span>
<span id="t89" class="t" style="top:609px;font-size:11px;line-height:13px;height:13px;color:#000;letter-spacing:-0.138px;right:1026.4px;">1690</span>
<span id="t90" class="t" style="top:609px;font-size:11px;line-height:13px;height:13px;color:#000;letter-spacing:-0.125px;right:972.4px;">0</span>
<span id="t91" class="t" style="top:609px;font-size:11px;line-height:13px;height:13px;color:#000;letter-spacing:-0.125px;right:930.4px;">0</span>
<span id="t92" class="t" style="top:609px;font-size:11px;line-height:13px;height:13px;color:#000;letter-spacing:-0.125px;right:882.4px;">0</span>
<span id="t93" class="t" style="top:609px;font-size:11px;line-height:13px;height:13px;color:#000;letter-spacing:-0.125px;right:840.4px;">0</span>
<span id="t94" class="t" style="top:609px;font-size:11px;line-height:13px;height:13px;color:#000;letter-spacing:-0.125px;right:792.4px;">0</span>
<span id="t95" class="t" style="top:626px;font-size:11px;line-height:13px;height:13px;color:#000;letter-spacing:0.278px;left:245.9px;">28/07/2024</span>
<span id="t96" class="t" style="top:626px;font-size:11px;line-height:13px;height:13px;color:#000;letter-spacing:-0.138px;right:1080.4px;">1690</span>
<span id="t97" class="t" style="top:626px;font-size:11px;line-height:13px;height:13px;color:#000;letter-spacing:-0.138px;right:1026.4px;">1690</span>
<span id="t98" class="t" style="top:626px;font-size:11px;line-height:13px;height:13px;color:#000;letter-spacing:-0.125px;right:972.4px;">0</span>
<span id="t99" class="t" style="top:626px;font-size:11px;line-height:13px;height:13px;color:#000;letter-spacing:-0.125px;right:930.4px;">0</span>
<span id="t100" class="t" style="top:626px;font-size:11px;line-height:13px;height:13px;color:#000;letter-spacing:-0.125px;right:882.4px;">0</span>
<span id="t101" class="t" style="top:626px;font-size:11px;line-height:13px;height:13px;color:#000;letter-spacing:-0.125px;right:840.4px;">0</span>
<span id="t102" class="t" style="top:626px;font-size:11px;line-height:13px;height:13px;color:#000;letter-spacing:-0.125px;right:792.4px;">0</span>
<span id="t103" class="t" style="top:643px;font-size:11px;line-height:13px;height:13px;color:#000;letter-spacing:0.278px;left:245.9px;">29/07/2024</span>
<span id="t104" class="t" style="top:643px;font-size:11px;line-height:13px;height:13px;color:#000;letter-spacing:-0.138px;right:1080.4px;">1690</span>
<span id="t105" class="t" style="top:643px;font-size:11px;line-height:13px;height:13px;color:#000;letter-spacing:-0.138px;right:1026.4px;">1690</span>
<span id="t106" class="t" style="top:643px;font-size:11px;line-height:13px;height:13px;color:#000;letter-spacing:-0.125px;right:972.4px;">0</span>
<span id="t107" class="t" style="top:643px;font-size:11px;line-height:13px;height:13px;color:#000;letter-spacing:-0.125px;right:930.4px;">0</span>
<span id="t108" class="t" style="top:643px;font-size:11px;line-height:13px;height:13px;color:#000;letter-spacing:-0.125px;right:882.4px;">0</span>
<span id="t109" class="t" style="top:643px;font-size:11px;line-height:13px;height:13px;color:#000;letter-spacing:-0.125px;right:840.4px;">0</span>
<span id="t110" class="t" style="top:643px;font-size:11px;line-height:13px;height:13px;color:#000;letter-spacing:-0.125px;right:792.4px;">0</span>
<span id="t111" class="t" style="top:660px;font-size:11px;line-height:13px;height:13px;color:#000;letter-spacing:0.278px;left:245.9px;">30/07/2024</span>
<span id="t112" class="t" style="top:660px;font-size:11px;line-height:13px;height:13px;color:#000;letter-spacing:-0.138px;right:1080.4px;">1690</span>
<span id="t113" class="t" style="top:660px;font-size:11px;line-height:13px;height:13px;color:#000;letter-spacing:-0.138px;right:1026.4px;">1690</span>
<span id="t114" class="t" style="top:660px;font-size:11px;line-height:13px;height:13px;color:#000;letter-spacing:-0.125px;right:972.4px;">0</span>
<span id="t115" class="t" style="top:660px;font-size:11px;line-height:13px;height:13px;color:#000;letter-spacing:-0.125px;right:930.4px;">0</span>
<span id="t116" class="t" style="top:660px;font-size:11px;line-height:13px;height:13px;color:#000;letter-spacing:-0.125px;right:882.4px;">0</span>
<span id="t117" class="t" style="top:660px;font-size:11px;line-height:13px;height:13px;color:#000;letter-spacing:-0.125px;right:840.4px;">0</span>
<span id="t118" class="t" style="top:660px;font-size:11px;line-height:13px;height:13px;color:#000;letter-spacing:-0.125px;right:792.4px;">0</span>
<span id="t119" class="t" style="top:677px;font-size:11px;line-height:13px;height:13px;color:#000;letter-spacing:0.278px;left:245.9px;">31/07/2024</span>
<span id="t120" class="t" style="top:677px;font-size:11px;line-height:13px;height:13px;color:#000;letter-spacing:-0.138px;right:1080.4px;">1690</span>
<span id="t121" class="t" style="top:677px;font-size:11px;line-height:13px;height:13px;color:#000;letter-spacing:-0.138px;right:1026.4px;">1690</span>
<span id="t122" class="t" style="top:677px;font-size:11px;line-height:13px;height:13px;color:#000;letter-spacing:-0.125px;right:972.4px;">0</span>
<span id="t123" class="t" style="top:677px;font-size:11px;line-height:13px;height:13px;color:#000;letter-spacing:-0.125px;right:930.4px;">0</span>
<span id="t124" class="t" style="top:677px;font-size:11px;line-height:13px;height:13px;color:#000;letter-spacing:-0.125px;right:882.4px;">0</span>
<span id="t125" class="t" style="top:677px;font-size:11px;line-height:13px;height:13px;color:#000;letter-spacing:-0.125px;right:840.4px;">0</span>
<span id="t126" class="t" style="top:677px;font-size:11px;line-height:13px;height:13px;color:#000;letter-spacing:-0.125px;right:792.4px;">0</span>
<span id="t127" class="t" style="top:694px;font-size:11px;line-height:13px;height:13px;color:#000;letter-spacing:0.278px;left:245.9px;">01/08/2024</span>
<span id="t128" class="t" style="top:694px;font-size:11px;line-height:13px;height:13px;color:#000;letter-spacing:-0.138px;right:1080.4px;">1690</span>
<span id="t129" class="t" style="top:694px;font-size:11px;line-height:13px;height:13px;color:#000;letter-spacing:-0.138px;right:1026.4px;">1690</span>
<span id="t130" class="t" style="top:694px;font-size:11px;line-height:13px;height:13px;color:#000;letter-spacing:-0.125px;right:972.4px;">0</span>
<span id="t131" class="t" style="top:694px;font-size:11px;line-height:13px;height:13px;color:#000;letter-spacing:-0.125px;right:930.4px;">0</span>
<span id="t132" class="t" style="top:694px;font-size:11px;line-height:13px;height:13px;color:#000;letter-spacing:-0.125px;right:882.4px;">0</span>
<span id="t133" class="t" style="top:694px;font-size:11px;line-height:13px;height:13px;color:#000;letter-spacing:-0.125px;right:840.4px;">0</span>
<span id="t134" class="t" style="top:694px;font-size:11px;line-height:13px;height:13px;color:#000;letter-spacing:-0.125px;right:792.4px;">0</span>
<span id="t135" class="t" style="top:711px;font-size:11px;line-height:13px;height:13px;color:#000;letter-spacing:0.278px;left:245.9px;">02/08/2024</span>
<span id="t136" class="t" style="top:711px;font-size:11px;line-height:13px;height:13px;color:#000;letter-spacing:-0.138px;right:1080.4px;">1690</span>
<span id="t137" class="t" style="top:711px;font-size:11px;line-height:13px;height:13px;color:#000;letter-spacing:-0.138px;right:1026.4px;">1690</span>
<span id="t138" class="t" style="top:711px;font-size:11px;line-height:13px;height:13px;color:#000;letter-spacing:-0.125px;right:972.4px;">0</span>
<span id="t139" class="t" style="top:711px;font-size:11px;line-height:13px;height:13px;color:#000;letter-spacing:-0.125px;right:930.4px;">0</span>
<span id="t140" class="t" style="top:711px;font-size:11px;line-height:13px;height:13px;color:#000;letter-spacing:-0.125px;right:882.4px;">0</span>
<span id="t141" class="t" style="top:711px;font-size:11px;line-height:13px;height:13px;color:#000;letter-spacing:-0.125px;right:840.4px;">0</span>
<span id="t142" class="t" style="top:711px;font-size:11px;line-height:13px;height:13px;color:#000;letter-spacing:-0.125px;right:792.4px;">0</span>
<span id="t143" class="t" style="top:728px;font-size:11px;line-height:13px;height:13px;color:#000;letter-spacing:0.278px;left:245.9px;">03/08/2024</span>
<span id="t144" class="t" style="top:728px;font-size:11px;line-height:13px;height:13px;color:#000;letter-spacing:-0.138px;right:1080.4px;">1690</span>
<span id="t145" class="t" style="top:728px;font-size:11px;line-height:13px;height:13px;color:#000;letter-spacing:-0.138px;right:1026.4px;">1690</span>
<span id="t146" class="t" style="top:728px;font-size:11px;line-height:13px;height:13px;color:#000;letter-spacing:-0.125px;right:972.4px;">0</span>
<span id="t147" class="t" style="top:728px;font-size:11px;line-height:13px;height:13px;color:#000;letter-spacing:-0.125px;right:930.4px;">0</span>
<span id="t148" class="t" style="top:728px;font-size:11px;line-height:13px;height:13px;color:#000;letter-spacing:-0.125px;right:882.4px;">0</span>
<span id="t149" class="t" style="top:728px;font-size:11px;line-height:13px;height:13px;color:#000;letter-spacing:-0.125px;right:840.4px;">0</span>
<span id="t150" class="t" style="top:728px;font-size:11px;line-height:13px;height:13px;color:#000;letter-spacing:-0.125px;right:792.4px;">0</span>
<span id="t151" class="t" style="top:745px;font-size:11px;line-height:13px;height:13px;color:#000;letter-spacing:0.278px;left:245.9px;">04/08/2024</span>
<span id="t152" class="t" style="top:745px;font-size:11px;line-height:13px;height:13px;color:#000;letter-spacing:-0.138px;right:1080.4px;">1690</span>
<span id="t153" class="t" style="top:745px;font-size:11px;line-height:13px;height:13px;color:#000;letter-spacing:-0.138px;right:1026.4px;">1690</span>
<span id="t154" class="t" style="top:745px;font-size:11px;line-height:13px;height:13px;color:#000;letter-spacing:-0.125px;right:972.4px;">0</span>
<span id="t155" class="t" style="top:745px;font-size:11px;line-height:13px;height:13px;color:#000;letter-spacing:-0.125px;right:930.4px;">0</span>
<span id="t156" class="t" style="top:745px;font-size:11px;line-height:13px;height:13px;color:#000;letter-spacing:-0.125px;right:882.4px;">0</span>
<span id="t157" class="t" style="top:745px;font-size:11px;line-height:13px;height:13px;color:#000;letter-spacing:-0.125px;right:840.4px;">0</span>
<span id="t158" class="t" style="top:745px;font-size:11px;line-height:13px;height:13px;color:#000;letter-spacing:-0.125px;right:792.4px;">0</span>
<div style="left:0;top:760px;width:1453px;height:5px;overflow:hidden">
<span id="t159" class="t" style="top:2px;font-size:11px;line-height:13px;height:13px;color:#000;letter-spacing:0.278px;left:245.9px;">05/08/2024</span>
<span id="t160" class="t" style="top:2px;font-size:11px;line-height:13px;height:13px;color:#000;letter-spacing:-0.138px;right:1080.4px;">1690</span>
<span id="t161" class="t" style="top:2px;font-size:11px;line-height:13px;height:13px;color:#000;letter-spacing:-0.138px;right:1026.4px;">1690</span>
<span id="t162" class="t" style="top:2px;font-size:11px;line-height:13px;height:13px;color:#000;letter-spacing:-0.125px;right:972.4px;">0</span>
<span id="t163" class="t" style="top:2px;font-size:11px;line-height:13px;height:13px;color:#000;letter-spacing:-0.125px;right:930.4px;">0</span>
<span id="t164" class="t" style="top:2px;font-size:11px;line-height:13px;height:13px;color:#000;letter-spacing:-0.125px;right:882.4px;">0</span>
<span id="t165" class="t" style="top:2px;font-size:11px;line-height:13px;height:13px;color:#000;letter-spacing:-0.125px;right:840.4px;">0</span>
<span id="t166" class="t" style="top:2px;font-size:11px;line-height:13px;height:13px;color:#000;letter-spacing:-0.125px;right:792.4px;">0</span>
</div>
<div class="track" style="left:1288px;top:300px;width:17px;height:465px;"></div>
<div class="sbtn" style="left:1288px;top:300px;width:17px;height:17px;"></div>
<svg style="left:1292.5px;top:305.5px" width="8" height="5" viewBox="0 0 8 5"><path d="M0.5 4.5H7.5L4 0.7Z" fill="#000"/></svg>
<div class="sbtn" style="left:1288px;top:320px;width:17px;height:22px;"></div>
<div class="sbtn" style="left:1288px;top:748px;width:17px;height:17px;"></div>
<svg style="left:1293px;top:755px" width="8" height="5" viewBox="0 0 8 5"><path d="M0.5 0.5H7.5L4 4.3Z" fill="#000"/></svg>
<div class="sunk" style="left:1314px;top:300px;width:100px;height:21px;background:#fff;"></div>
<div class="sbtn" style="left:1396px;top:302px;width:16px;height:17px;"></div>
<svg style="left:1400px;top:309px" width="8" height="5" viewBox="0 0 8 5"><path d="M0.5 0.5H7.5L4 4.3Z" fill="#000"/></svg>
<span id="t167" class="t" style="top:306px;font-size:11px;line-height:13px;height:13px;color:#000;letter-spacing:0.309px;left:1315.5px;">22/07/2024</span>
<div class="btn" style="left:1314px;top:324px;width:101px;height:23px;"></div>
<span id="t168" class="t" style="top:329px;font-size:11px;line-height:13px;height:13px;color:#000;letter-spacing:-0.189px;left:1340.5px;">Gebruik ?</span>
<div class="btn" style="left:1314px;top:349px;width:101px;height:23px;"></div>
<span id="t169" class="t" style="top:354px;font-size:11px;line-height:13px;height:13px;color:#000;letter-spacing:-0.349px;left:1346.4px;">Grafiek</span>
<div style="left:217px;top:112px;width:12px;height:10px;background:#fff;"></div>
<div style="left:218px;top:114px;width:753px;height:374px;background:#b9d1ea;border:1px solid #000;border-radius:6px 6px 0 0;box-shadow:inset 0 0 0 1px #f2f7fc;"></div>
<div style="left:220px;top:116px;width:749px;height:29px;background:linear-gradient(#98b3d1,#bdd4ec);border-radius:5px 5px 0 0;"></div>
<div style="left:969px;top:123px;width:1px;height:364px;background:linear-gradient(#9fd8ee,#45d9f5 40px);"></div>
<div style="left:219px;top:486px;width:751px;height:1px;background:#45d9f5;"></div>
<svg style="left:229px;top:126px" width="15" height="17" viewBox="0 0 15 17"><polygon points="1.3,4.4 4.4,1.1 6.6,1.1 13.6,4.8 13.6,12.3 8.7,15.8 1.3,11.7" fill="#fff" stroke="#000" stroke-width="1.3" stroke-linejoin="round"/><polygon points="8.6,7.8 11.2,5 13,5.8 13,12 8.8,14.9" fill="#dadada"/><path d="M3.5 5.4 V12.8 M5.7 6.5 V13.9 M7.9 7.6 V15.2 M3.5 5.4 L6.5 2.2 M5.7 6.5 L8.8 3.3 M7.9 7.6 L11 4.4" fill="none" stroke="#000" stroke-width="1.1"/><circle cx="11" cy="8.8" r="1.1" fill="#123a86"/><circle cx="10.6" cy="8.2" r="0.6" fill="#14a08a"/><circle cx="11.3" cy="11.2" r="0.8" fill="#1414ff"/><circle cx="10.3" cy="12.7" r="0.8" fill="#1414ff"/></svg>
<span id="t170" class="t" style="top:127px;font-size:12px;line-height:14px;height:14px;color:#000;letter-spacing:-0.018px;left:248.7px;">Waar in gebruik op 22/07/2024 - Moon stoel wit</span>
<div style="left:861px;top:124px;width:32px;height:18px;background:linear-gradient(#c6d9ee 0,#bdd2ea 45%,#a0bad8 50%,#a9c2de 100%);border:1px solid #566787;border-radius:3px;box-shadow:inset 0 0 0 1px rgba(255,255,255,.55);"></div>
<svg style="left:870px;top:131px" width="13" height="7" viewBox="0 0 13 7"><rect x="1.5" y="1.5" width="10" height="4" rx="0.8" fill="#fbfbfb" stroke="#41485c" stroke-width="1"/></svg>
<div style="left:895px;top:124px;width:32px;height:18px;background:linear-gradient(#c6d9ee 0,#bdd2ea 45%,#a0bad8 50%,#a9c2de 100%);border:1px solid #566787;border-radius:3px;box-shadow:inset 0 0 0 1px rgba(255,255,255,.55);"></div>
<svg style="left:904px;top:127px" width="13" height="11" viewBox="0 0 13 11"><rect x="1.5" y="1.5" width="10" height="8" rx="0.8" fill="#fbfbfb" stroke="#41485c" stroke-width="1"/><rect x="4.5" y="4.5" width="4" height="2" fill="#9fb6d2" stroke="#41485c" stroke-width="1"/></svg>
<div style="left:929px;top:124px;width:32px;height:18px;background:linear-gradient(#e9a99b 0,#e29886 45%,#c0452a 50%,#c65a40 75%,#d98a74 100%);border:1px solid #431422;border-radius:3px;box-shadow:inset 0 0 0 1px rgba(255,255,255,.55);"></div>
<svg style="left:938px;top:127px" width="14" height="11" viewBox="0 0 14 11"><path d="M2 2 H5.2 L7 4 L8.8 2 H12 L8.8 5.6 L12 9.4 H8.8 L7 7.3 L5.2 9.4 H2 L5.2 5.6 Z" fill="#fbfbfb" stroke="#41485c" stroke-width="1" stroke-linejoin="round"/></svg>
<div style="left:226px;top:145px;width:737px;height:335px;background:#6c7ba8;border:1px solid;border-color:#a0a0a0 #fff #fff #a0a0a0;"></div>
<div style="left:230px;top:153px;width:726px;height:289px;background:#f0f0f0;"></div>
<div style="left:230px;top:173px;width:726px;height:269px;background:#f0f0f0;border:1px solid;border-color:#fff #696969 #696969 #fff;box-shadow:inset -1px -1px 0 #a0a0a0;"></div>
<div style="left:231px;top:153px;width:52px;height:22px;background:#f0f0f0;border:1px solid;border-color:#fff #696969 #f0f0f0 #fff;border-radius:2px 2px 0 0;box-shadow:inset -1px 0 0 #a0a0a0;"></div>
<div style="left:283px;top:155px;width:52px;height:19px;background:#f0f0f0;border:1px solid;border-color:#fff #696969 transparent #f0f0f0;border-radius:2px 2px 0 0;box-shadow:inset -1px 0 0 #a0a0a0;"></div>
<span id="t171" class="t" style="top:157px;font-size:11px;line-height:13px;height:13px;color:#000;letter-spacing:-0.407px;left:238.4px;">Bonnen</span>
<span id="t172" class="t" style="top:158px;font-size:11px;line-height:13px;height:13px;color:#000;letter-spacing:-0.332px;left:287.3px;">Logistiek</span>
<div class="sunk" style="left:233px;top:175px;width:719px;height:262px;background:#fff;"></div>
<div style="left:235px;top:177px;width:714px;height:17px;background:#fff;"></div>
<div style="left:236px;top:178px;width:13px;height:50px;background:#f0f0f0;"></div>
<div style="left:249px;top:194px;width:700px;height:1px;background:#d6d0c6;"></div>
<div style="left:249px;top:211px;width:700px;height:1px;background:#d4d4d4;"></div>
<div style="left:235px;top:418px;width:14px;height:17px;background:#f0f0f0;"></div>
<div class="hc" style="left:250px;top:178px;width:21px;height:15px;"></div>
<div class="hc" style="left:274px;top:178px;width:61px;height:15px;"></div>
<div class="hc" style="left:338px;top:178px;width:33px;height:15px;"></div>
<div class="hc" style="left:374px;top:178px;width:44px;height:15px;"></div>
<div class="hc" style="left:421px;top:178px;width:220px;height:15px;"></div>
<div class="hc" style="left:644px;top:178px;width:63px;height:15px;"></div>
<div class="hc" style="left:710px;top:178px;width:63px;height:15px;"></div>
<div class="hc" style="left:776px;top:178px;width:63px;height:15px;"></div>
<div class="hc" style="left:842px;top:178px;width:63px;height:15px;"></div>
<div class="hc" style="left:908px;top:178px;width:41px;height:15px;"></div>
<span id="t173" class="t" style="top:179px;font-size:11px;line-height:13px;height:13px;color:#000;letter-spacing:-0.672px;left:252.3px;">M</span>
<span id="t174" class="t" style="top:179px;font-size:11px;line-height:13px;height:13px;color:#000;letter-spacing:-0.420px;left:276.8px;">Bonnr.</span>
<span id="t175" class="t" style="top:179px;font-size:11px;line-height:13px;height:13px;color:#000;letter-spacing:-0.042px;left:340.3px;">T.</span>
<span id="t176" class="t" style="top:179px;font-size:11px;line-height:13px;height:13px;color:#000;letter-spacing:-0.344px;left:376.1px;">S</span>
<span id="t177" class="t" style="top:179px;font-size:11px;line-height:13px;height:13px;color:#000;letter-spacing:-0.755px;left:423.3px;">Naam</span>
<span id="t178" class="t" style="top:179px;font-size:11px;line-height:13px;height:13px;color:#000;letter-spacing:-0.419px;left:646.2px;">Aantal</span>
<span id="t179" class="t" style="top:179px;font-size:11px;line-height:13px;height:13px;color:#000;letter-spacing:-0.343px;left:712.3px;">Begin bl.</span>
<span id="t180" class="t" style="top:179px;font-size:11px;line-height:13px;height:13px;color:#000;letter-spacing:-0.475px;left:779px;">Transp.uit</span>
<span id="t181" class="t" style="top:179px;font-size:11px;line-height:13px;height:13px;color:#000;letter-spacing:-0.275px;left:844.2px;">Transp. in</span>
<div style="left:910.2px;top:179px;width:38.799999999999955px;height:13px;overflow:hidden"><span id="t182" class="t" style="top:179px;font-size:11px;line-height:13px;height:13px;color:#000;letter-spacing:-0.154px;left:910.2px;left:0;top:0;">Einde bl.</span></div>
<div style="left:272px;top:177px;width:1px;height:52px;background:#b4b4b4;"></div>
<div style="left:336px;top:177px;width:1px;height:52px;background:#b4b4b4;"></div>
<div style="left:372px;top:177px;width:1px;height:52px;background:#b4b4b4;"></div>
<div style="left:419px;top:177px;width:1px;height:52px;background:#b4b4b4;"></div>
<div style="left:642px;top:177px;width:1px;height:52px;background:#b4b4b4;"></div>
<div style="left:708px;top:177px;width:1px;height:52px;background:#b4b4b4;"></div>
<div style="left:774px;top:177px;width:1px;height:52px;background:#b4b4b4;"></div>
<div style="left:840px;top:177px;width:1px;height:52px;background:#b4b4b4;"></div>
<div style="left:906px;top:177px;width:1px;height:52px;background:#b4b4b4;"></div>
<div style="left:249px;top:228px;width:700px;height:1px;background:#c0c0c0;"></div>
<div style="left:249px;top:195px;width:700px;height:16px;background:#0078d7;"></div>
<div style="left:272px;top:195px;width:1px;height:16px;background:#b9cde6;"></div>
<div style="left:336px;top:195px;width:1px;height:16px;background:#b9cde6;"></div>
<div style="left:372px;top:195px;width:1px;height:16px;background:#b9cde6;"></div>
<div style="left:419px;top:195px;width:1px;height:16px;background:#b9cde6;"></div>
<div style="left:642px;top:195px;width:1px;height:16px;background:#b9cde6;"></div>
<div style="left:708px;top:195px;width:1px;height:16px;background:#b9cde6;"></div>
<div style="left:774px;top:195px;width:1px;height:16px;background:#b9cde6;"></div>
<div style="left:840px;top:195px;width:1px;height:16px;background:#b9cde6;"></div>
<div style="left:906px;top:195px;width:1px;height:16px;background:#b9cde6;"></div>
<span id="t183" class="t" style="top:197px;font-size:11px;line-height:13px;height:13px;color:#fff;letter-spacing:-0.433px;left:251.7px;">01</span>
<span id="t184" class="t" style="top:197px;font-size:11px;line-height:13px;height:13px;color:#fff;letter-spacing:-0.255px;left:274.7px;">C205704</span>
<span id="t185" class="t" style="top:197px;font-size:11px;line-height:13px;height:13px;color:#fff;letter-spacing:-0.854px;left:339px;">VH</span>
<span id="t186" class="t" style="top:197px;font-size:11px;line-height:13px;height:13px;color:#fff;letter-spacing:-0.579px;left:375.4px;">LA</span>
<span id="t187" class="t" style="top:197px;font-size:11px;line-height:13px;height:13px;color:#fff;letter-spacing:-0.274px;left:422.5px;">KAA GENT CVBA</span>
<span id="t188" class="t" style="top:197px;font-size:11px;line-height:13px;height:13px;color:#fff;letter-spacing:-0.304px;right:747px;">272</span>
<span id="t189" class="t" style="top:197px;font-size:11px;line-height:13px;height:13px;color:#fff;letter-spacing:0.225px;left:711.2px;">21/06/2021</span>
<span id="t190" class="t" style="top:197px;font-size:11px;line-height:13px;height:13px;color:#fff;letter-spacing:0.225px;left:777.3px;">20/07/2021</span>
<span id="t191" class="t" style="top:197px;font-size:11px;line-height:13px;height:13px;color:#fff;letter-spacing:0.225px;left:843.4px;">01/07/2024</span>
<div style="left:909.4px;top:197px;width:39.60000000000002px;height:13px;overflow:hidden"><span id="t192" class="t" style="top:197px;font-size:11px;line-height:13px;height:13px;color:#fff;letter-spacing:0.225px;left:909.4px;left:0;top:0;">02/07/2024</span></div>
<span id="t193" class="t" style="top:214px;font-size:11px;line-height:13px;height:13px;color:#000;letter-spacing:-0.433px;left:251.7px;">01</span>
<span id="t194" class="t" style="top:214px;font-size:11px;line-height:13px;height:13px;color:#000;letter-spacing:-0.255px;left:274.7px;">C309452</span>
<span id="t195" class="t" style="top:214px;font-size:11px;line-height:13px;height:13px;color:#000;letter-spacing:-0.854px;left:339px;">VH</span>
<span id="t196" class="t" style="top:214px;font-size:11px;line-height:13px;height:13px;color:#000;letter-spacing:-1.200px;left:375.4px;">BE</span>
<span id="t197" class="t" style="top:214px;font-size:11px;line-height:13px;height:13px;color:#000;letter-spacing:-0.145px;left:422.5px;">THE EVENT COMPANY</span>
<span id="t198" class="t" style="top:214px;font-size:11px;line-height:13px;height:13px;color:#000;letter-spacing:-0.304px;right:747px;">170</span>
<span id="t199" class="t" style="top:214px;font-size:11px;line-height:13px;height:13px;color:#000;letter-spacing:0.225px;left:711.2px;">18/07/2024</span>
<span id="t200" class="t" style="top:214px;font-size:11px;line-height:13px;height:13px;color:#000;letter-spacing:0.225px;left:777.3px;">19/07/2024</span>
<span id="t201" class="t" style="top:214px;font-size:11px;line-height:13px;height:13px;color:#000;letter-spacing:0.225px;left:843.4px;">22/07/2024</span>
<div style="left:909.4px;top:214px;width:39.60000000000002px;height:13px;overflow:hidden"><span id="t202" class="t" style="top:214px;font-size:11px;line-height:13px;height:13px;color:#000;letter-spacing:0.225px;left:909.4px;left:0;top:0;">23/07/2024</span></div>
<svg style="left:238px;top:198px" width="5" height="9" viewBox="0 0 5 9"><path d="M0.5 0.5L4.5 4.5L0.5 8.5Z" fill="#000"/></svg>
<div class="track" style="left:249px;top:418px;width:700px;height:17px;"></div>
<div class="sbtn" style="left:249px;top:418px;width:17px;height:17px;"></div>
<svg style="left:254px;top:422px" width="5" height="9" viewBox="0 0 5 9"><path d="M4.5 0.5L0.5 4.5L4.5 8.5Z" fill="#000"/></svg>
<div class="sbtn" style="left:266px;top:418px;width:264px;height:17px;"></div>
<div class="sbtn" style="left:932px;top:418px;width:17px;height:17px;"></div>
<svg style="left:939px;top:422px" width="5" height="9" viewBox="0 0 5 9"><path d="M0.5 0.5L4.5 4.5L0.5 8.5Z" fill="#000"/></svg>
<span id="t203" class="t" style="top:459px;font-size:11px;line-height:13px;height:13px;color:#000;letter-spacing:-0.179px;left:231.8px;">Geteld aantal 442</span>
<span id="t204" class="t" style="top:459px;font-size:11px;line-height:13px;height:13px;color:#000;letter-spacing:-0.191px;left:508.7px;">Rekening klopt</span>
<div class="btn" style="left:793px;top:450px;width:80px;height:23px;"></div>
<span id="t205" class="t" style="top:455px;font-size:11px;line-height:13px;height:13px;color:#000;letter-spacing:-0.312px;left:806.2px;">Spring naar</span>
<div class="btn" style="left:877px;top:450px;width:80px;height:23px;border:1px solid #696969;"></div>
<div class="btn" style="left:878px;top:451px;width:78px;height:21px;"></div>
<span id="t206" class="t" style="top:455px;font-size:11px;line-height:13px;height:13px;color:#000;letter-spacing:-0.406px;left:901.1px;">Sluiten</span>
</div>
</body></html>
